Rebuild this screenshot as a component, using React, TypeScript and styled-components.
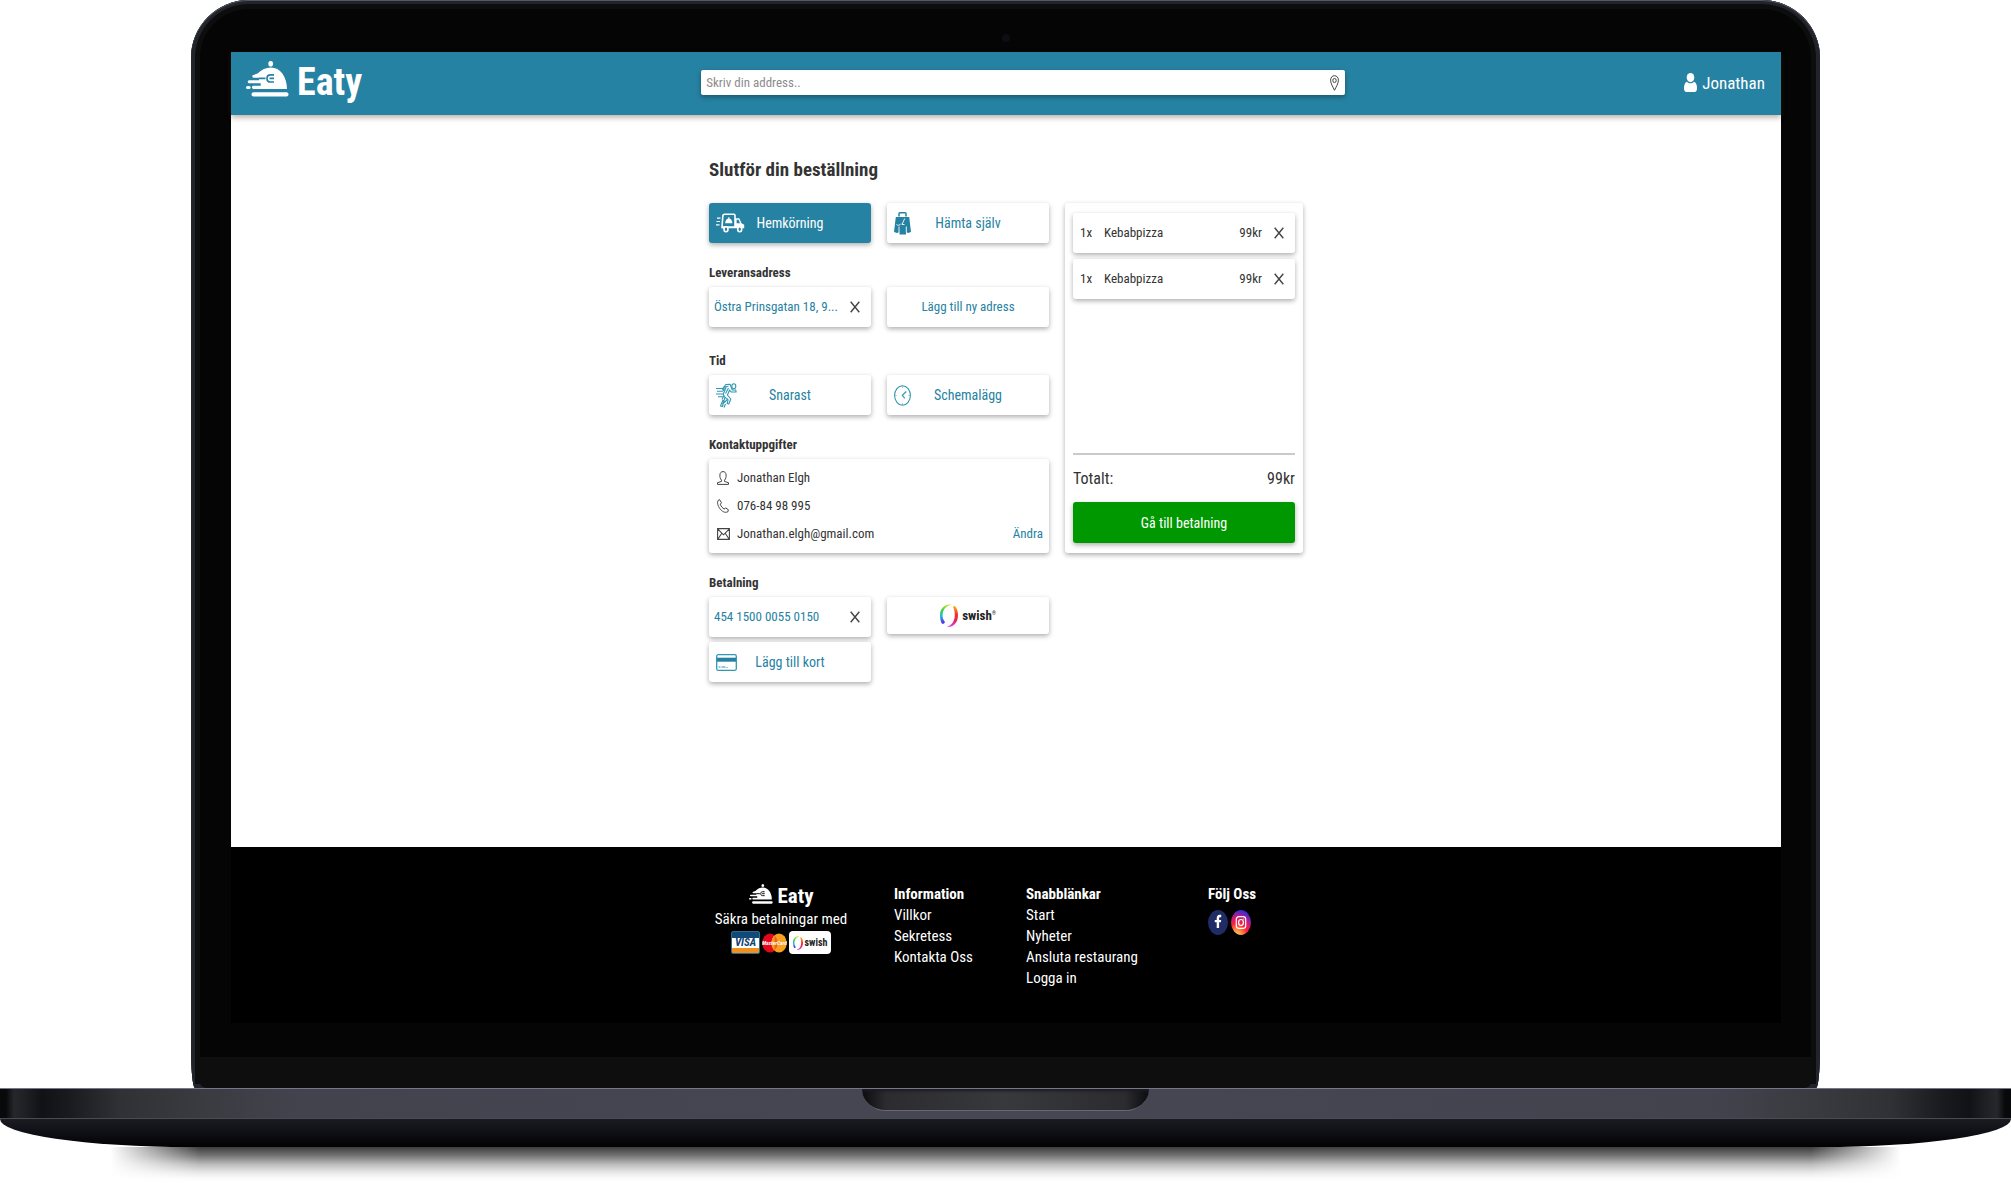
import React from "react";
import styled, { createGlobalStyle, css } from "styled-components";

const teal = "#2682a2";
const ink = "#333333";
const fontStack = `"Roboto Condensed", "Liberation Sans Narrow", Roboto, "Liberation Sans", sans-serif`;

const GlobalStyle = createGlobalStyle`
  *, *::before, *::after { box-sizing: border-box; }
  body { margin: 0; background: #fff; color: ${ink}; font-family: ${fontStack}; font-size: 14px; line-height: 20px; }
  h1, h2, p, ul { margin: 0; padding: 0; }
  ul { list-style: none; }
  button, input { font: inherit; color: inherit; margin: 0; }
  button { border: 0; padding: 0; background: none; cursor: pointer; }
  a { color: inherit; text-decoration: none; }
  svg { display: block; flex: none; }
`;

/* ---------- laptop ---------- */

const Laptop = styled.div`
  min-height: 100vh;
  display: flex;
  flex-direction: column;
  overflow: hidden;
`;

const Lid = styled.div`
  flex: 1;
  width: 81%;
  margin: 0 auto;
  display: flex;
  flex-direction: column;
  background: #050505;
  border-radius: 58px 58px 4px 4px / 58px 58px 40px 40px;
  box-shadow: inset 0 1px 0 #55585c, inset 0 0 0 4px #22242b, inset 0 0 0 9px #0d0d0e;
`;

const Bezel = styled.div`
  height: 52px;
  display: flex;
  align-items: center;
  justify-content: center;
  padding-top: 24px;
`;

const Camera = styled.span`
  width: 8px;
  height: 8px;
  border-radius: 50%;
  background: #0d0d12;
`;

const Screen = styled.div`
  flex: 1;
  display: flex;
  flex-direction: column;
  margin: 0 39px 0 40px;
  background: #fff;
`;

const Chin = styled.div`
  height: 31px;
  margin: 34px 8px 0;
  background: #0e0e0e;
  border-radius: 0 0 8px 8px;
`;

const Deck = styled.div`
  height: 31px;
  display: flex;
  justify-content: center;
  align-items: flex-start;
  border-top: 1px solid #77768a;
  border-bottom: 1px solid #4a4a55;
  background: linear-gradient(
    90deg,
    #08090b 0, #08090b 6px, #26272b 14px, #202125 24px, #111216 42px, #1a1b1e 70px, #303134 120px, #3a3b40 200px, #43434e 300px,
    #474653 50%,
    #43434e calc(100% - 300px), #3a3b40 calc(100% - 200px), #303134 calc(100% - 120px), #1a1b1e calc(100% - 70px),
    #111216 calc(100% - 42px), #202125 calc(100% - 24px), #26272b calc(100% - 14px), #08090b calc(100% - 6px), #08090b 100%
  );
`;

const Notch = styled.div`
  width: 287px;
  height: 22px;
  border-bottom: 1px solid #686776;
  border-radius: 0 0 24px 24px / 0 0 21px 21px;
  background: linear-gradient(90deg, #0c0c10 0, #2b2b30 24px, #38393d 50%, #2b2b30 calc(100% - 24px), #0c0c10 100%);
  box-shadow: inset 0 2px 3px #1c1c20;
`;

const Underside = styled.div`
  height: 28px;
  background: linear-gradient(#1b1b21, #101116 45%, #020203);
  border-radius: 0 0 190px 190px / 0 0 28px 28px;
`;

const Shadow = styled.div`
  height: 36px;
  margin: 0 110px;
  background: linear-gradient(#3c3c3c 0, #777 25%, #bbb 48%, #eaeaea 72%, #fcfcfc 88%, #fff 100%);
  mask-image: linear-gradient(90deg, transparent 0, #000 90px, #000 calc(100% - 90px), transparent 100%);
`;

/* ---------- header ---------- */

const Header = styled.header`
  height: 63px;
  display: flex;
  align-items: center;
  justify-content: space-between;
  padding: 0 16px 2px 15px;
  background: ${teal};
  box-shadow: 0 2px 6px rgba(60, 30, 10, 0.4);
  z-index: 1;
`;

const Brand = styled.a<{ $small?: boolean }>`
  display: flex;
  align-items: flex-start;
  gap: ${(p) => (p.$small ? 5 : 8)}px;
  color: #fff;
  font-weight: 700;
  font-size: ${(p) => (p.$small ? 21 : 38)}px;
  line-height: ${(p) => (p.$small ? 25 : 43)}px;
`;

const SearchBox = styled.label`
  width: 644px;
  height: 25px;
  display: flex;
  align-items: center;
  padding: 0 6px 0 5px;
  background: #fff;
  border-radius: 2px;
  box-shadow: 0 2px 5px rgba(0, 0, 0, 0.35);
`;

const SearchInput = styled.input.attrs({ type: "text" })`
  flex: 1;
  min-width: 0;
  padding: 0;
  border: 0;
  outline: 0;
  background: transparent;
  font-size: 13px;
  &::placeholder { color: #8c8c8c; opacity: 1; }
`;

const UserLink = styled.a`
  display: flex;
  align-items: center;
  gap: 5px;
  color: #fff;
  font-size: 17px;
`;

/* ---------- checkout ---------- */

const Main = styled.main`
  flex: 1;
  width: 594px;
  margin: 0 auto;
  padding-top: 43px;
`;

const Title = styled.h1`
  font-size: 19px;
  line-height: 24px;
  margin-bottom: 21px;
`;

const Columns = styled.div`
  display: grid;
  grid-template-columns: 340px 238px;
  gap: 16px;
  align-items: start;
`;

const Section = styled.section<{ $loose?: boolean }>`
  margin-bottom: ${(p) => (p.$loose ? 26 : 22)}px;
`;

const Label = styled.h2`
  font-size: 13px;
  line-height: 16px;
  margin-bottom: 6px;
`;

const Pair = styled.div`
  display: grid;
  grid-template-columns: 1fr 1fr;
  gap: 5px 16px;
  align-items: start;
`;

const raised = css`
  background: #fff;
  border-radius: 3px;
  box-shadow: 0 2px 5px rgba(0, 0, 0, 0.32);
`;

const Choice = styled.button<{ $active?: boolean; $icon?: boolean }>`
  ${raised}
  height: 40px;
  display: grid;
  grid-template-columns: ${(p) => (p.$icon ? "30px 1fr 30px" : "1fr")};
  align-items: center;
  justify-items: ${(p) => (p.$icon ? "start" : "center")};
  padding: 0 7px;
  color: ${teal};
  font-size: ${(p) => (p.$icon ? 14 : 13)}px;
  ${(p) => p.$active && css`background: ${teal}; color: #fff;`}
  & > span { justify-self: center; }
`;

const SwishChoice = styled(Choice)`
  height: 37px;
`;

const Chip = styled.div`
  ${raised}
  height: 40px;
  display: flex;
  align-items: center;
  justify-content: space-between;
  padding: 0 11px 0 5px;
  color: ${teal};
  font-size: 13px;
  white-space: nowrap;
`;

const ContactCard = styled.div`
  ${raised}
  display: flex;
  align-items: flex-end;
  justify-content: space-between;
  padding: 5px 6px 5px 8px;
  font-size: 13px;
  line-height: 28px;
`;

const ContactRow = styled.li`
  display: grid;
  grid-template-columns: 14px auto;
  gap: 6px;
  align-items: center;
`;

const EditLink = styled.a`
  color: ${teal};
`;

const Summary = styled.aside`
  ${raised}
  min-height: 350px;
  display: flex;
  flex-direction: column;
  padding: 10px 8px;
`;

const Items = styled.ul`
  flex: 1;
  display: flex;
  flex-direction: column;
  gap: 6px;
`;

const Item = styled.li`
  ${raised}
  height: 40px;
  display: grid;
  grid-template-columns: 16px 1fr auto 10px;
  align-items: center;
  column-gap: 8px;
  padding: 0 11px 0 7px;
  font-size: 13px;
  & > button { justify-self: end; }
`;

const Price = styled.span`
  margin-right: 4px;
`;

const Total = styled.p`
  display: flex;
  justify-content: space-between;
  padding: 14px 0 13px;
  border-top: 2px solid #cacaca;
  font-size: 16px;
`;

const PayButton = styled.button`
  height: 41px;
  border-radius: 3px;
  background: #009800;
  color: #fff;
  box-shadow: 0 2px 5px rgba(0, 0, 0, 0.32);
`;

/* ---------- footer ---------- */

const Footer = styled.footer`
  height: 176px;
  padding-top: 37px;
  background: #000;
  color: #fff;
`;

const FooterGrid = styled.div`
  width: 594px;
  margin: 0 auto;
  display: grid;
  grid-template-columns: 144px 91px 141px auto;
  gap: 41px;
  font-size: 15px;
  line-height: 21px;
  white-space: nowrap;
`;

const PayColumn = styled.div`
  display: flex;
  flex-direction: column;
  align-items: center;
`;

const FooterHead = styled.h2`
  font-size: 15px;
  line-height: 21px;
`;

const Marks = styled.div`
  display: flex;
  align-items: center;
  gap: 2px;
  padding-top: 1px;
`;

const Badge = styled.span<{ $kind: "visa" | "mc" | "swish" }>`
  height: 23px;
  display: flex;
  align-items: center;
  justify-content: center;
  ${(p) => p.$kind === "visa" && css`
    width: 29px;
    background: linear-gradient(#0f4a78 0 6px, #fff 6px 16px, #f0901e 16px);
    border: 1px solid #2b6c93;
    border-radius: 2px;
    color: #10426f;
    font: italic 700 11px/12px ${fontStack};
  `}
  ${(p) => p.$kind === "swish" && css`
    width: 42px;
    background: #fff;
    border-radius: 4px;
  `}
`;

const SwishMark = styled.span<{ $small?: boolean }>`
  display: inline-flex;
  align-items: center;
  gap: ${(p) => (p.$small ? 2 : 4)}px;
  color: #222;
  font-weight: 700;
  font-size: ${(p) => (p.$small ? 10 : 13)}px;
  line-height: 16px;
`;

const Reg = styled.sup`
  font-size: 5px;
  line-height: 5px;
`;

const Social = styled.div`
  display: flex;
  gap: 3px;
  padding-top: 5px;
`;

/* ---------- drawings ---------- */

const DishLogo = ({ w, h, bg }: { w: number; h: number; bg: string }) => (
  <svg width={w} height={h} viewBox="0 0 43 36" preserveAspectRatio="none" fill="#fff" aria-hidden="true">
    <ellipse cx="24.700" cy="2.800" rx="2.400" ry="2.800" />
    <path d="M11.500 12.400C15.500 8.500 20 6.400 25 6.400c9 0 16 9 16 21.600H7.200a1.700 1.700 0 0 1 0-3.300h7.500v-2.500H3.200a1.500 1.500 0 0 1 0-3H13v-2.400H7.700a1.450 1.450 0 0 1 0-2.900z" />
    <rect x="0" y="25" width="4.600" height="3" rx="1.500" />
    <rect x="5.500" y="31.200" width="37" height="4.200" rx="2" />
    <path d="M13 17.400h6.500M28 13.900h-3.500c-2.500 0-3.500 1.400-3.500 3.500s1 3.600 3.500 3.600H28M23.500 17.400H28" fill="none" stroke={bg} strokeWidth="1.700" />
  </svg>
);

const PinIcon = () => (
  <svg width="9" height="16" viewBox="0 0 9 16" fill="none" stroke="#444" aria-hidden="true">
    <path d="M4.500 15.300C3 12 .6 8.500.6 5.200.6 2.500 2.300.7 4.500.7s3.900 1.800 3.900 4.500c0 3.300-2.400 6.800-3.900 10.100z" />
    <ellipse cx="4.500" cy="5.500" rx="1.700" ry="2.100" />
  </svg>
);

const UserIcon = () => (
  <svg width="13" height="19" viewBox="0 0 13 19" fill="#fff" aria-hidden="true">
    <ellipse cx="6.500" cy="4.600" rx="3.800" ry="4.600" />
    <path d="M3 8.700c2 2 5 2 7 0 2 .8 3 2.800 3 6.300 0 2.700-.8 4-2.500 4h-8C.8 19 0 17.700 0 15c0-3.500 1-5.500 3-6.300z" />
  </svg>
);

const VanIcon = () => (
  <svg width="29" height="20" viewBox="0 0 29 20" fill="none" stroke="#fff" strokeWidth="1.600" aria-hidden="true">
    <path d="M1 5.200h3.500M.5 8.500h3.500M0 11.800h3.500" strokeWidth="1.200" />
    <path d="M8 14.500H6L6.800 3.200C6.900 1.800 7.500 1.200 8.600 1.200h9.200c.8 0 1.200.4 1.200 1.400v12" />
    <path d="M19 5.200h4.300l2.200 5 2.700 1.500v3.600H6v-2h13z" fill="#fff" stroke="none" />
    <path d="M20.600 6.800h2l1.400 3.400h-3.400z" fill={teal} stroke="none" />
    <ellipse cx="10" cy="16.200" rx="2" ry="2.500" fill={teal} />
    <ellipse cx="23.700" cy="16.200" rx="2" ry="2.500" fill={teal} />
    <path d="M9.200 10.300h7.200c0-2.600-1.500-4.300-3-4.700V4.300h-1.200v1.300c-1.500.4-3 2.100-3 4.700z" fill="#fff" stroke="none" />
  </svg>
);

const BagIcon = () => (
  <svg width="17" height="23" viewBox="0 0 17 23" fill={teal} aria-hidden="true">
    <path d="M5 4.500V1.700c0-.5.300-.9.800-.9h5.400c.5 0 .8.400.8.900v2.800" fill="none" stroke={teal} strokeWidth="1.500" />
    <path d="M1.800 5h13.400L17 20l-3 1-2-1v2.500H5.500V20L3 21l-3-1z" />
    <path d="M10.700 6.500 8 12.500h2.500M5 14.500v6M12.300 14.500v6M2.500 12.500c1.500 1.200 3 1.200 4.300-.8" fill="none" stroke="#fff" strokeWidth=".9" />
  </svg>
);

const RunnerIcon = () => (
  <svg width="21" height="25" viewBox="0 0 21 25" fill="none" stroke="#3397b3" strokeWidth="1.100" strokeLinejoin="round" aria-hidden="true">
    <path d="M0 5.500h7M1 8.300h6M0 11h7M2 13.700h5" />
    <ellipse cx="17.800" cy="3.300" rx="2" ry="2.500" />
    <path d="M7.500 7.500 6.300 6l3.500-4.500 4.200-.3 2.300 5.800h3.500l.3 2h-5l-1.500-2-2.200 5 3.400 4-2 5-1.700-.5 1-3.700-4-3.500-.8-2.300 3-7.300h-1.800z" fill="#fff" />
    <path d="m10.300 3.500 2.200-.2M9.500 10.500l3-5.500M8 12.500l-2 4M9 14.500 7.800 18l-1.300 5.500-2-.5 2.500-6M12 16l-5.500 5M9.500 21 8 24.500" />
  </svg>
);

const ClockIcon = () => (
  <svg width="17" height="21" viewBox="0 0 17 21" fill="none" stroke="#3397b3" aria-hidden="true">
    <ellipse cx="8.500" cy="10.500" rx="7.900" ry="9.800" strokeWidth="1.100" />
    <path d="M12.300 6.500 8.300 10.300l2.500 3" strokeWidth="1.200" />
    <path d="M8.500 1.500v1.200M8.500 18.300v1.200M1.500 10.500h1M14.500 10.500h1" strokeWidth=".7" />
  </svg>
);

const CardIcon = () => (
  <svg width="21" height="17" viewBox="0 0 21 17" fill="none" stroke="#3397b3" aria-hidden="true">
    <rect x=".7" y=".7" width="19.600" height="15.600" rx="1.500" strokeWidth="1.300" />
    <path d="M1 5.700h19" stroke={teal} strokeWidth="4" />
    <path d="M2.500 13h2M5.500 13h4M10.500 13.500h1" strokeWidth="1" />
  </svg>
);

const CloseIcon = () => (
  <svg width="10" height="12" viewBox="0 0 10 12" stroke="#444" strokeWidth="1.400" aria-hidden="true">
    <path d="m.7.700 8.600 10.600M9.300.700.7 11.300" />
  </svg>
);

const PersonIcon = () => (
  <svg width="12" height="14" viewBox="0 0 12 14" fill="none" stroke="#444" aria-hidden="true">
    <path d="M4.500 9.200C3 7.500 2.800 5.800 2.900 4 3 1.700 4.200.6 6 .6s3 1.100 3.100 3.400c.1 1.800-.1 3.500-1.600 5.200v1.200l4 1.300v1.700H.5v-1.700l4-1.300z" />
  </svg>
);

const PhoneIcon = () => (
  <svg width="12" height="14" viewBox="0 0 12 14" fill="none" stroke="#444" aria-hidden="true">
    <path d="M1.200 1.300 2.500.6l2 3.200-1.200 1.400c.5 2 2.300 4 4 4.800l1.200-1.200 2.900 2-.6 2C8 14.200 5 12.500 3 9.800 1 7.200-.2 3.500 1.200 1.300z" />
  </svg>
);

const MailIcon = () => (
  <svg width="13" height="12" viewBox="0 0 13 12" fill="none" stroke="#444" strokeWidth="1.100" aria-hidden="true">
    <path d="M.6.600h11.800v10.800H.6zM.6.800l5.900 6 5.900-6M.8 11.200l4-6M12.200 11.200l-4-6" />
  </svg>
);

const SwishRing = ({ w, h, id }: { w: number; h: number; id: string }) => (
  <svg width={w} height={h} viewBox="0 0 18 23" preserveAspectRatio="none" aria-hidden="true">
    <defs>
      <linearGradient id={`${id}l`} x1="0" y1="0" x2="0" y2="1">
        <stop offset="0" stopColor="#d8e02c" />
        <stop offset=".3" stopColor="#35d43c" />
        <stop offset=".6" stopColor="#22b9e0" />
        <stop offset="1" stopColor="#5a1be0" />
      </linearGradient>
      <linearGradient id={`${id}r`} x1="0" y1="0" x2="0" y2="1">
        <stop offset="0" stopColor="#ffb01a" />
        <stop offset=".4" stopColor="#f5301f" />
        <stop offset=".7" stopColor="#e8235c" />
        <stop offset="1" stopColor="#d24df0" />
      </linearGradient>
    </defs>
    <path d="M11.500.8C6-.8 0 3.500 0 11.200c0 3 .6 6 1.800 8.300.6.700 2.600.5 3.200-1.500C3.400 16 2.500 14 2.600 11 2.700 5.500 6 1.800 11.500.8z" fill={`url(#${id}l)`} />
    <path d="M13 2.800c.6-1 2-.9 2.700.3C17.200 5.200 18 8 18 11.200 18 19 12.500 24.200 6.800 22.500c5-1 8-5.500 8-11.300 0-3.200-.6-6-1.800-8.400z" fill={`url(#${id}r)`} />
  </svg>
);

const Swish = ({ small, id }: { small?: boolean; id: string }) => (
  <SwishMark $small={small}>
    <SwishRing w={small ? 10 : 18} h={small ? 14 : 23} id={id} />
    <span>
      swish
      {!small && <Reg>®</Reg>}
    </span>
  </SwishMark>
);

const MasterCard = () => (
  <svg width="25" height="20" viewBox="0 0 25 20" role="img" aria-label="MasterCard">
    <ellipse cx="8" cy="10" rx="7.700" ry="9.500" fill="#e4061c" />
    <ellipse cx="17" cy="10" rx="7.700" ry="9.500" fill="#f9a01e" />
    <path d="M12.500 2.500c4.300 4 4.300 11 0 15" fill="#f0621c" />
    <text x="12.500" y="12" textAnchor="middle" fill="#fff" fontSize="5.500" fontStyle="italic" fontWeight="700">MasterCard</text>
  </svg>
);

const Facebook = () => (
  <svg width="20" height="25" viewBox="0 0 20 25" aria-hidden="true">
    <ellipse cx="10" cy="12.500" rx="10" ry="12.500" fill="#1f2c66" />
    <path d="M8.700 18v-5.700H6.800V9.900h1.900V8.400c0-2.400 1.100-3.600 2.900-3.600h1.600v2.500h-1.100c-.8 0-1 .5-1 1.200v1.400h2.100l-.3 2.400h-1.800V18z" fill="#fff" />
  </svg>
);

const Instagram = () => (
  <svg width="20" height="25" viewBox="0 0 20 25" aria-hidden="true">
    <defs>
      <radialGradient id="ig" cx=".3" cy="1.050" r="1.100">
        <stop offset="0" stopColor="#ffd86b" />
        <stop offset=".25" stopColor="#fb8a3c" />
        <stop offset=".48" stopColor="#f9223f" />
        <stop offset=".7" stopColor="#c81a78" />
        <stop offset=".95" stopColor="#3a2bd6" />
      </radialGradient>
    </defs>
    <ellipse cx="10" cy="12.500" rx="10" ry="12.500" fill="url(#ig)" />
    <g fill="none" stroke="#fff" strokeWidth="1.200">
      <rect x="5.300" y="6.700" width="9.400" height="11.600" rx="2.600" />
      <ellipse cx="10" cy="12.500" rx="2.400" ry="3" />
    </g>
    <ellipse cx="12.700" cy="9.100" rx=".6" ry=".7" fill="#fff" />
  </svg>
);

/* ---------- page ---------- */

const orderLines = [
  { id: 1, qty: "1x", name: "Kebabpizza", price: "99kr" },
  { id: 2, qty: "1x", name: "Kebabpizza", price: "99kr" },
];

const linkGroups = [
  { head: "Information", links: ["Villkor", "Sekretess", "Kontakta Oss"] },
  { head: "Snabblänkar", links: ["Start", "Nyheter", "Ansluta restaurang", "Logga in"] },
];

const RemoveButton = ({ label }: { label: string }) => (
  <button type="button" aria-label={label}>
    <CloseIcon />
  </button>
);

export default function App() {
  return (
    <Laptop>
      <GlobalStyle />
      <Lid>
        <Bezel>
          <Camera />
        </Bezel>
        <Screen>
          <Header>
            <Brand href="#">
              <DishLogo w={43} h={36} bg={teal} />
              Eaty
            </Brand>
            <SearchBox>
              <SearchInput placeholder="Skriv din address.." aria-label="Skriv din address" />
              <PinIcon />
            </SearchBox>
            <UserLink href="#">
              <UserIcon />
              Jonathan
            </UserLink>
          </Header>

          <Main>
            <Title>Slutför din beställning</Title>
            <Columns>
              <div>
                <Section>
                  <Pair>
                    <Choice type="button" $active $icon>
                      <VanIcon />
                      <span>Hemkörning</span>
                    </Choice>
                    <Choice type="button" $icon>
                      <BagIcon />
                      <span>Hämta själv</span>
                    </Choice>
                  </Pair>
                </Section>
                <Section $loose>
                  <Label>Leveransadress</Label>
                  <Pair>
                    <Chip>
                      Östra Prinsgatan 18, 9...
                      <RemoveButton label="Ta bort adress" />
                    </Chip>
                    <Choice type="button">
                      <span>Lägg till ny adress</span>
                    </Choice>
                  </Pair>
                </Section>
                <Section>
                  <Label>Tid</Label>
                  <Pair>
                    <Choice type="button" $icon>
                      <RunnerIcon />
                      <span>Snarast</span>
                    </Choice>
                    <Choice type="button" $icon>
                      <ClockIcon />
                      <span>Schemalägg</span>
                    </Choice>
                  </Pair>
                </Section>
                <Section>
                  <Label>Kontaktuppgifter</Label>
                  <ContactCard>
                    <ul>
                      <ContactRow>
                        <PersonIcon />
                        Jonathan Elgh
                      </ContactRow>
                      <ContactRow>
                        <PhoneIcon />
                        076-84 98 995
                      </ContactRow>
                      <ContactRow>
                        <MailIcon />
                        Jonathan.elgh@gmail.com
                      </ContactRow>
                    </ul>
                    <EditLink href="#">Ändra</EditLink>
                  </ContactCard>
                </Section>
                <Section>
                  <Label>Betalning</Label>
                  <Pair>
                    <Chip>
                      454 1500 0055 0150
                      <RemoveButton label="Ta bort kort" />
                    </Chip>
                    <SwishChoice type="button">
                      <Swish id="pay" />
                    </SwishChoice>
                    <Choice type="button" $icon>
                      <CardIcon />
                      <span>Lägg till kort</span>
                    </Choice>
                  </Pair>
                </Section>
              </div>

              <Summary>
                <Items>
                  {orderLines.map((line) => (
                    <Item key={line.id}>
                      <span>{line.qty}</span>
                      <span>{line.name}</span>
                      <Price>{line.price}</Price>
                      <RemoveButton label={`Ta bort ${line.name}`} />
                    </Item>
                  ))}
                </Items>
                <Total>
                  <span>Totalt:</span>
                  <span>99kr</span>
                </Total>
                <PayButton type="button">Gå till betalning</PayButton>
              </Summary>
            </Columns>
          </Main>

          <Footer>
            <FooterGrid>
              <PayColumn>
                <Brand href="#" $small>
                  <DishLogo w={24} h={20} bg="#000" />
                  Eaty
                </Brand>
                <p>Säkra betalningar med</p>
                <Marks>
                  <Badge $kind="visa">VISA</Badge>
                  <MasterCard />
                  <Badge $kind="swish">
                    <Swish small id="foot" />
                  </Badge>
                </Marks>
              </PayColumn>
              {linkGroups.map((group) => (
                <div key={group.head}>
                  <FooterHead>{group.head}</FooterHead>
                  <ul>
                    {group.links.map((link) => (
                      <li key={link}>
                        <a href="#">{link}</a>
                      </li>
                    ))}
                  </ul>
                </div>
              ))}
              <div>
                <FooterHead>Följ Oss</FooterHead>
                <Social>
                  <a href="#" aria-label="Facebook">
                    <Facebook />
                  </a>
                  <a href="#" aria-label="Instagram">
                    <Instagram />
                  </a>
                </Social>
              </div>
            </FooterGrid>
          </Footer>
        </Screen>
        <Chin />
      </Lid>
      <Deck>
        <Notch />
      </Deck>
      <Underside />
      <Shadow />
    </Laptop>
  );
}
